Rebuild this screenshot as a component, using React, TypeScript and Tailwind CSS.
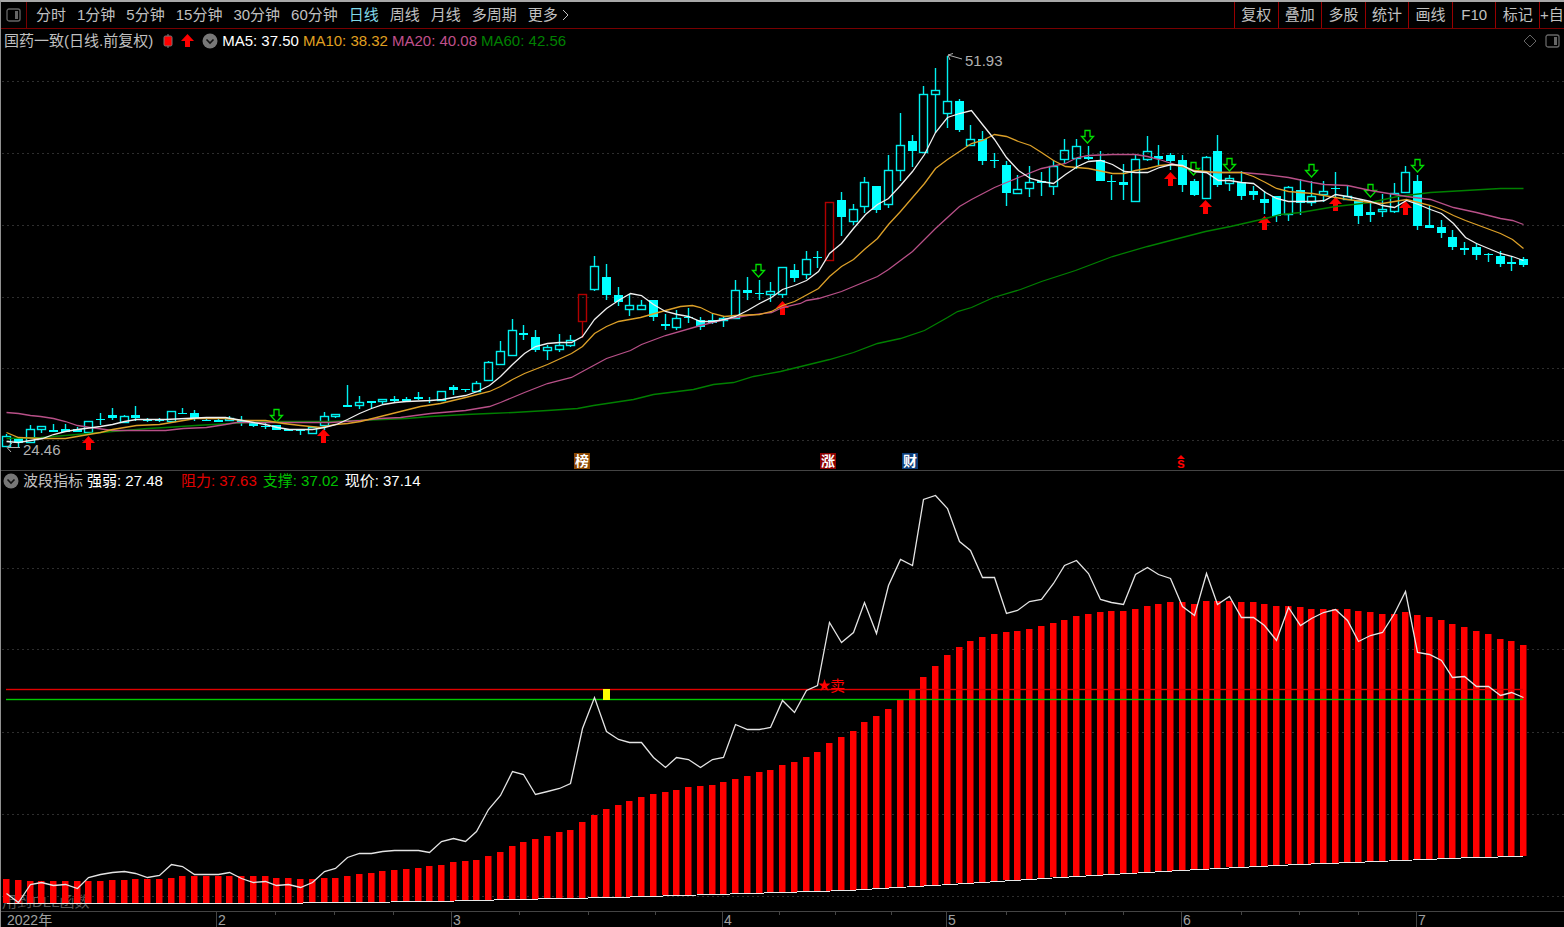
import clsx from 'clsx'

type Candle = [kind: 'h' | 'f' | 'r', high: number, top: number, bottom: number, low: number]
type Point = [x: number, y: number]

const PERIODS = ['分时', '1分钟', '5分钟', '15分钟', '30分钟', '60分钟', '日线', '周线', '月线', '多周期']
const TOOLS = ['复权', '叠加', '多股', '统计', '画线', 'F10', '标记']

const AVERAGES = [
  { label: 'MA5: 37.50', className: 'text-white' },
  { label: 'MA10: 38.32', className: 'text-[#e0a020]' },
  { label: 'MA20: 40.08', className: 'text-[#c0508c]' },
  { label: 'MA60: 42.56', className: 'text-[#008000]' },
]

// h = hollow, f = filled, r = limit-up
const CANDLES: Candle[] = [
  ['h', 434, 436, 447, 447], ['f', 437, 438, 443, 448], ['h', 425, 429, 443, 443], ['h', 426, 426, 430, 433],
  ['f', 424, 430, 432, 432], ['f', 424, 429, 432, 432], ['f', 427, 429, 432, 432], ['h', 421, 421, 433, 433],
  ['f', 413, 419, 420, 425], ['f', 408, 415, 418, 420], ['h', 415, 416, 423, 423], ['f', 406, 415, 418, 421],
  ['f', 418, 419, 421, 422], ['f', 418, 420, 421, 422], ['h', 411, 411, 422, 422], ['f', 408, 413, 414, 414],
  ['f', 410, 413, 419, 421], ['f', 419, 420, 421, 421], ['f', 419, 420, 422, 422], ['h', 416, 418, 421, 421],
  ['f', 416, 420, 423, 426], ['f', 422, 423, 426, 427], ['f', 423, 426, 427, 429], ['f', 425, 425, 430, 430],
  ['f', 429, 429, 431, 431], ['f', 429, 430, 431, 435], ['h', 426, 427, 434, 434], ['h', 412, 416, 426, 430],
  ['h', 414, 414, 417, 418], ['f', 385, 405, 407, 407], ['h', 396, 402, 406, 409], ['f', 401, 401, 403, 408],
  ['h', 399, 399, 402, 404], ['f', 396, 399, 401, 402], ['f', 397, 399, 401, 402], ['f', 392, 397, 399, 400],
  ['f', 397, 400, 401, 403], ['h', 391, 391, 401, 401], ['f', 385, 387, 390, 395], ['f', 389, 389, 390, 392],
  ['h', 381, 383, 392, 392], ['h', 361, 362, 381, 381], ['h', 341, 351, 365, 365], ['h', 319, 330, 356, 356],
  ['f', 325, 333, 335, 340], ['f', 330, 337, 350, 352], ['h', 345, 347, 351, 360], ['h', 334, 345, 350, 352],
  ['h', 335, 340, 346, 347], ['r', 294, 294, 322, 338], ['h', 256, 266, 290, 291], ['f', 264, 277, 295, 300],
  ['f', 287, 295, 302, 306], ['h', 294, 305, 310, 316], ['h', 300, 305, 310, 310], ['f', 300, 300, 317, 321],
  ['f', 314, 324, 326, 330], ['h', 310, 318, 328, 330], ['f', 308, 317, 318, 323], ['f', 317, 320, 327, 330],
  ['f', 314, 320, 323, 324], ['h', 317, 318, 321, 327], ['h', 280, 290, 319, 319], ['f', 277, 290, 293, 300],
  ['f', 280, 293, 294, 300], ['h', 282, 291, 295, 302], ['h', 267, 267, 295, 298], ['f', 264, 270, 278, 282],
  ['h', 251, 259, 275, 279], ['f', 251, 257, 258, 268], ['r', 202, 202, 261, 261], ['f', 192, 200, 217, 236],
  ['h', 204, 209, 222, 225], ['h', 177, 182, 207, 213], ['f', 186, 186, 210, 213], ['h', 155, 170, 205, 208],
  ['h', 113, 145, 171, 181], ['f', 135, 141, 151, 167], ['h', 86, 94, 153, 153], ['h', 68, 90, 95, 133],
  ['h', 56, 101, 114, 128], ['f', 99, 101, 130, 132], ['h', 125, 139, 146, 146], ['f', 131, 139, 161, 165],
  ['f', 153, 160, 161, 168], ['f', 161, 165, 193, 206], ['h', 175, 189, 194, 194], ['h', 166, 182, 189, 197],
  ['f', 172, 181, 183, 196], ['h', 160, 166, 187, 195], ['h', 139, 150, 160, 163], ['h', 139, 146, 159, 169],
  ['f', 146, 157, 159, 160], ['f', 151, 160, 181, 181], ['f', 175, 181, 182, 200], ['f', 164, 182, 185, 200],
  ['h', 155, 159, 202, 202], ['h', 136, 151, 160, 161], ['f', 145, 156, 159, 165], ['f', 153, 155, 161, 170],
  ['f', 155, 160, 185, 192], ['f', 179, 181, 195, 196], ['h', 156, 157, 199, 199], ['f', 135, 151, 185, 187],
  ['h', 175, 178, 184, 191], ['f', 171, 182, 196, 200], ['f', 186, 191, 195, 200], ['f', 191, 199, 203, 214],
  ['f', 196, 196, 216, 222], ['h', 186, 187, 215, 221], ['f', 179, 190, 203, 215], ['h', 181, 196, 203, 206],
  ['h', 181, 191, 195, 202], ['f', 172, 188, 189, 199], ['h', 185, 196, 200, 200], ['f', 200, 200, 216, 224],
  ['f', 202, 212, 215, 222], ['h', 194, 209, 212, 217], ['h', 183, 193, 212, 213], ['h', 166, 172, 193, 193],
  ['f', 175, 181, 226, 230], ['f', 206, 225, 228, 228], ['f', 220, 227, 233, 238], ['f', 230, 237, 247, 250],
  ['f', 242, 248, 250, 255], ['f', 243, 247, 255, 260], ['f', 253, 254, 255, 262], ['f', 251, 256, 264, 267],
  ['f', 257, 262, 264, 271], ['f', 257, 259, 265, 267],
]

const MA5: Point[] = [
  [6, 441], [18, 442], [30, 440], [42, 438], [53, 434], [65, 431], [77, 429], [100, 426], [112, 424], [124, 421],
  [136, 419], [165, 419], [206, 417], [225, 417], [242, 420], [253, 422], [265, 424], [277, 427], [289, 429],
  [312, 429], [324, 427], [336, 424], [347, 419], [359, 413], [371, 408], [383, 404], [395, 402], [406, 401],
  [430, 400], [442, 399], [453, 397], [465, 395], [477, 391], [489, 385], [500, 376], [512, 364], [524, 353],
  [535, 346], [547, 343], [559, 342], [571, 342], [582, 336], [594, 319], [606, 308], [618, 300], [630, 293],
  [641, 295], [653, 304], [665, 311], [677, 314], [688, 316], [700, 321], [712, 321], [724, 319], [735, 316],
  [747, 310], [759, 303], [771, 297], [782, 289], [794, 285], [806, 280], [818, 271], [829, 253], [841, 243],
  [853, 228], [865, 214], [877, 204], [888, 198], [900, 185], [912, 171], [924, 154], [935, 132], [947, 117],
  [959, 113], [971, 110], [982, 124], [994, 139], [1006, 157], [1018, 170], [1030, 178], [1041, 181], [1053, 183],
  [1065, 174], [1077, 166], [1088, 161], [1100, 160], [1112, 164], [1124, 171], [1135, 172], [1147, 172],
  [1159, 167], [1171, 164], [1182, 165], [1194, 171], [1206, 172], [1218, 180], [1229, 180], [1241, 182],
  [1253, 183], [1265, 192], [1276, 198], [1288, 201], [1312, 201], [1324, 200], [1335, 194], [1347, 196],
  [1370, 201], [1382, 205], [1394, 207], [1406, 200], [1418, 204], [1430, 209], [1441, 213], [1453, 223],
  [1465, 237], [1476, 243], [1500, 253], [1512, 256], [1523, 260],
]

const MA10: Point[] = [
  [6, 432], [18, 437], [40, 438], [65, 438], [88, 434], [100, 432], [112, 429], [124, 427], [136, 425], [159, 424],
  [177, 421], [195, 418], [225, 418], [242, 420], [265, 420], [283, 423], [300, 425], [320, 427], [335, 424],
  [347, 423], [360, 421], [380, 416], [400, 411], [420, 406], [440, 403], [465, 397], [489, 391], [500, 386],
  [512, 379], [524, 373], [547, 364], [571, 353], [582, 346], [594, 333], [606, 326], [618, 321], [640, 317],
  [665, 310], [680, 306], [692, 305], [700, 307], [712, 313], [724, 316], [735, 315], [759, 314], [771, 311],
  [782, 305], [794, 301], [818, 288], [829, 276], [841, 266], [853, 259], [865, 248], [877, 238], [888, 224],
  [900, 211], [912, 197], [924, 183], [935, 168], [947, 159], [959, 151], [971, 143], [982, 140], [994, 134],
  [1006, 136], [1018, 141], [1030, 145], [1041, 152], [1053, 160], [1065, 166], [1088, 168], [1112, 173],
  [1124, 173], [1135, 170], [1147, 168], [1159, 165], [1171, 164], [1182, 166], [1194, 170], [1206, 171],
  [1218, 172], [1241, 172], [1253, 176], [1265, 182], [1276, 188], [1288, 191], [1312, 193], [1335, 197],
  [1347, 199], [1370, 202], [1382, 203], [1394, 201], [1406, 199], [1418, 202], [1430, 205], [1441, 209],
  [1453, 215], [1465, 220], [1500, 233], [1512, 239], [1523, 248],
]

const MA20: Point[] = [
  [6, 412], [18, 413], [30, 415], [40, 416], [53, 418], [65, 421], [77, 425], [90, 427], [112, 430], [165, 430],
  [183, 428], [206, 427], [225, 424], [236, 422], [330, 422], [360, 420], [380, 418], [400, 417], [430, 413],
  [465, 410], [489, 406], [500, 402], [512, 397], [524, 392], [547, 383], [571, 377], [582, 371], [606, 358],
  [630, 350], [641, 344], [665, 335], [700, 325], [724, 319], [747, 315], [771, 312], [782, 307], [800, 303],
  [806, 300], [818, 298], [841, 291], [877, 276], [888, 269], [912, 251], [935, 228], [947, 217], [959, 206],
  [971, 199], [994, 187], [1006, 182], [1018, 177], [1041, 168], [1065, 163], [1077, 157], [1088, 155],
  [1112, 154], [1135, 154], [1147, 156], [1159, 159], [1171, 163], [1182, 166], [1194, 171], [1206, 172],
  [1241, 172], [1265, 174], [1288, 177], [1312, 182], [1324, 184], [1347, 185], [1370, 190], [1406, 196],
  [1430, 199], [1453, 207], [1476, 212], [1500, 218], [1512, 220], [1523, 224],
]

const MA60: Point[] = [
  [6, 438], [40, 437], [65, 435], [88, 433], [112, 431], [136, 429], [147, 428], [165, 427], [195, 425],
  [230, 423], [265, 421], [330, 421], [383, 419], [406, 418], [430, 416], [465, 414], [489, 413], [513, 412],
  [547, 410], [577, 408], [593, 405], [633, 399], [653, 394], [693, 389], [713, 384], [733, 382], [753, 376],
  [780, 371], [829, 359], [853, 352], [877, 343], [900, 338], [924, 330], [947, 317], [957, 311], [971, 307],
  [993, 297], [1020, 289], [1041, 281], [1075, 270], [1112, 256], [1147, 246], [1170, 240], [1205, 231],
  [1230, 226], [1265, 218], [1280, 214], [1300, 212], [1335, 206], [1370, 202], [1397, 196], [1430, 192],
  [1465, 190], [1500, 188], [1523, 188],
]

const BAR_TOPS = [
  879, 880, 881, 881, 881, 881, 881, 881, 881, 880, 880, 879, 879, 879, 878, 876, 876, 876, 876, 876, 876, 876, 876,
  878, 878, 879, 879, 878, 878, 876, 874, 873, 871, 870, 869, 868, 866, 865, 862, 861, 860, 856, 852, 846, 842, 839,
  836, 832, 830, 822, 815, 809, 805, 801, 797, 794, 792, 790, 787, 786, 785, 782, 779, 776, 772, 770, 765, 762, 757,
  752, 743, 737, 731, 722, 716, 709, 699, 689, 677, 666, 655, 647, 641, 637, 634, 632, 631, 629, 626, 623, 620, 616,
  614, 612, 611, 611, 609, 606, 604, 602, 602, 604, 601, 601, 601, 602, 602, 604, 606, 606, 607, 609, 609, 609, 609,
  611, 612, 614, 614, 612, 615, 617, 620, 624, 627, 631, 634, 639, 641, 645,
]

const STRENGTH = [
  893, 902, 884, 882, 885, 884, 888, 877, 874, 872, 871, 873, 877, 875, 864, 866, 874, 874, 874, 872, 878, 882, 881,
  885, 884, 887, 882, 871, 868, 857, 853, 853, 851, 850, 850, 850, 852, 841, 838, 841, 831, 809, 795, 771, 774, 794,
  791, 788, 783, 728, 697, 731, 739, 742, 742, 757, 767, 757, 759, 767, 759, 757, 724, 729, 729, 727, 700, 712, 690,
  685, 622, 642, 632, 602, 633, 585, 559, 565, 499, 495, 508, 541, 550, 577, 577, 613, 610, 601, 599, 583, 565, 560,
  573, 599, 602, 604, 574, 567, 574, 578, 606, 615, 573, 604, 596, 617, 617, 625, 640, 607, 625, 618, 612, 609, 620,
  641, 635, 632, 613, 591, 652, 654, 660, 677, 676, 686, 686, 695, 692, 697,
]

const BASELINE: Point[] = [
  [6, 903], [259, 903], [435, 901], [513, 899], [613, 897], [713, 894], [780, 892], [847, 890], [880, 888],
  [950, 884], [1060, 877], [1180, 870], [1297, 864], [1353, 862], [1400, 860], [1473, 857], [1523, 856],
]

const BUY_ARROWS: Point[] = [
  [88, 436], [323, 429], [782, 301], [1170, 172], [1205, 200], [1264, 216], [1335, 197], [1405, 201],
]
const SELL_ARROWS: Point[] = [
  [276, 409], [758, 264], [1087, 130], [1193, 162], [1229, 158], [1311, 164], [1370, 184], [1417, 159],
]

const BADGES = [
  { x: 574, label: '榜', fill: '#8a4500' },
  { x: 820, label: '涨', fill: '#8c0000' },
  { x: 902, label: '财', fill: '#0c3c78' },
]

const MONTHS = [
  { x: 217, label: '2' },
  { x: 452, label: '3' },
  { x: 723, label: '4' },
  { x: 947, label: '5' },
  { x: 1182, label: '6' },
  { x: 1417, label: '7' },
]
const WEEKS = [275, 334, 393, 519, 588, 655, 779, 835, 891, 1006, 1065, 1123, 1241, 1299, 1358]

const xAt = (i: number) => Math.round(6 + 11.76 * i)
const toPoints = (points: Point[]) => points.map(([x, y]) => `${x + 0.5},${y + 0.5}`).join(' ')

const baseAt = (x: number) => {
  const next = Math.max(1, BASELINE.findIndex(([px]) => px >= x))
  const [x0, y0] = BASELINE[next - 1]
  const [x1, y1] = BASELINE[next]
  return Math.round(y0 + ((x - x0) / (x1 - x0)) * (y1 - y0))
}

const GridLines = ({ rows }: { rows: number[] }) => (
  <g stroke="#2e2e2e" strokeDasharray="2 3" shapeRendering="crispEdges">
    {rows.map((y) => (
      <line key={y} x1="2" x2="1564" y1={y + 0.5} y2={y + 0.5} />
    ))}
  </g>
)

const PanelIcon = ({ className }: { className?: string }) => (
  <svg viewBox="0 0 15 14" className={clsx('h-3.5 w-[15px]', className)} fill="none" aria-hidden="true">
    <rect x="1" y="1" width="13" height="12" rx="2" stroke="currentColor" strokeWidth="1.3" />
    <rect x="9" y="3" width="3" height="8" fill="currentColor" />
  </svg>
)

const CollapseButton = ({ label }: { label: string }) => (
  <button type="button" aria-label={label} className="size-4 shrink-0">
    <svg viewBox="0 0 16 16" className="size-4" fill="none" aria-hidden="true">
      <circle cx="8" cy="8" r="7.5" fill="#777" />
      <path d="M4.5 6.5 8 10l3.500-3.500" stroke="#111" strokeWidth="1.6" />
    </svg>
  </button>
)

const Toolbar = () => (
  <header className="flex h-[27px] items-stretch border-b border-[#780000] text-[#c0c0c0]">
    <button
      type="button"
      aria-label="侧栏"
      className="flex w-[26px] shrink-0 items-center justify-center border-r border-[#780000] text-[#666]"
    >
      <PanelIcon />
    </button>
    <nav className="flex min-w-0 flex-1 items-center gap-[11px] overflow-hidden pl-[9px]">
      {PERIODS.map((period) => (
        <button
          key={period}
          type="button"
          className={clsx('shrink-0', period === '日线' && 'text-[#80d8e8]')}
        >
          {period}
        </button>
      ))}
      <button type="button" className="flex shrink-0 items-center gap-1">
        更多
        <svg viewBox="0 0 7 12" className="h-3 w-[7px]" fill="none" aria-hidden="true">
          <path d="m1 1 5 5-5 5" stroke="currentColor" />
        </svg>
      </button>
    </nav>
    <div className="flex w-[305px] shrink-0">
      {TOOLS.map((tool) => (
        <button key={tool} type="button" className="flex-1 border-l border-[#980000]">
          {tool}
        </button>
      ))}
    </div>
    <button type="button" className="w-[25px] shrink-0 border-l border-[#980000] whitespace-nowrap">
      +自
    </button>
  </header>
)

const PriceChart = () => (
  <svg viewBox="1 52 1563 418" className="block h-auto w-full" fill="none" role="img" aria-label="日线">
    <GridLines rows={[81, 153, 225, 297, 368, 440]} />

    {CANDLES.map(([kind, high, top, bottom, low], i) => {
      const x = xAt(i)
      const color = kind === 'r' ? '#b00000' : '#00f0f0'
      return (
        <g key={i} stroke={color} strokeWidth="1.4">
          {top > high && <path d={`M${x + 0.5} ${high}V${top}`} />}
          {low > bottom && <path d={`M${x + 0.5} ${bottom}V${low}`} />}
          {kind === 'f' ? (
            <rect x={x - 4} y={top} width="9" height={bottom - top} fill="#00ffff" stroke="none" />
          ) : (
            <rect x={x - 3.5} y={top + 0.5} width="8" height={bottom - top - 1} />
          )}
        </g>
      )
    })}

    {BUY_ARROWS.map(([x, y]) => (
      <path key={x} d={`M${x + 0.5} ${y}l6.500 7h-4v7h-5v-7h-4z`} fill="#ff0000" />
    ))}
    {SELL_ARROWS.map(([x, y]) => (
      <path key={x} d={`M${x - 2} ${y + 0.5}h5v6h3.500l-6 6.500-6-6.500h3.500z`} stroke="#00e000" strokeWidth="1.3" />
    ))}

    <g strokeWidth="1.3">
      <polyline points={toPoints(MA60)} stroke="#008000" />
      <polyline points={toPoints(MA20)} stroke="#b85088" />
      <polyline points={toPoints(MA10)} stroke="#dca028" />
      <polyline points={toPoints(MA5)} stroke="#f0f0f0" />
    </g>

    <g stroke="#b0b0b0">
      <path d="m948 55 14 4M953 53.500l-5 1.500 2 5" />
      <path d="M8 447.500h12M12 443l-5 4.500 4 4.500" />
    </g>
    <g fill="#b0b0b0" fontSize="15">
      <text x="965" y="66">51.93</text>
      <text x="23" y="455">24.46</text>
    </g>

    {BADGES.map(({ x, label, fill }) => (
      <g key={label}>
        <rect x={x} y="453" width="16" height="16" fill={fill} />
        <text x={x + 8} y="466" fill="#fff" fontSize="14" fontWeight="700" textAnchor="middle">
          {label}
        </text>
      </g>
    ))}
    <path d="m1177 459 4-4 4 4z" fill="#ff0000" />
    <text x="1181" y="468" fill="#ff0000" fontSize="14" fontWeight="700" textAnchor="middle">
      s
    </text>
  </svg>
)

const WaveChart = () => (
  <svg viewBox="1 491 1563 420" className="block h-auto w-full" fill="none" role="img" aria-label="波段指标">
    <GridLines rows={[568, 649, 732, 814, 896]} />
    <text x="2" y="907" fill="#5a5a5a" fontSize="15">
      用到DLL函数
    </text>

    <g fill="#ff0000">
      {BAR_TOPS.map((top, i) => (
        <rect key={i} x={xAt(i) - 3} y={top} width="6.500" height={baseAt(xAt(i)) - top} />
      ))}
    </g>

    <polyline points={toPoints(BASELINE)} stroke="#e8e8e8" shapeRendering="crispEdges" />
    <rect x="6" y="688.8" width="1517" height="1.4" fill="#e00000" />
    <rect x="6" y="698.8" width="1517" height="1.4" fill="#00c800" />
    <polyline points={toPoints(STRENGTH.map((y, i) => [xAt(i), y]))} stroke="#e4e4e4" strokeWidth="1.3" />

    <rect x="603" y="689" width="7" height="11" fill="#ffff00" />
    <path d="m824.500 679 1.500 4.500h4.500l-3.500 3 1.500 4.500-4-3-4 3 1.500-4.500-3.500-3h4.500z" fill="#ff0000" />
    <text x="830" y="691" fill="#ff0000" fontSize="15">
      卖
    </text>
  </svg>
)

const TimeAxis = () => (
  <svg viewBox="1 911 1563 16" className="block h-auto w-full" fill="none" role="img" aria-label="日期">
    <g stroke="#444" shapeRendering="crispEdges">
      <line x1="1" x2="1564" y1="911.5" y2="911.5" />
      {MONTHS.map(({ x }) => (
        <line key={x} x1={x - 0.5} x2={x - 0.5} y1="911" y2="927" />
      ))}
      {WEEKS.map((x) => (
        <line key={x} x1={x + 0.5} x2={x + 0.5} y1="911" y2="915" />
      ))}
    </g>
    <g fill="#a0a0a0" fontSize="14">
      <text x="7" y="925">2022年</text>
      {MONTHS.map(({ x, label }) => (
        <text key={x} x={x + 1} y="925">
          {label}
        </text>
      ))}
    </g>
  </svg>
)

const App = () => {
  return (
    <main className="min-h-screen overflow-hidden border-t-2 border-l border-t-[#a8a8a8] border-l-[#909090] bg-black font-['Liberation_Sans','Noto_Sans_CJK_SC',sans-serif] text-[15px] leading-5 text-[#c0c0c0]">
      <Toolbar />

      <section>
        <div className="flex h-[23px] items-center gap-1 pr-1 pl-[3px] whitespace-nowrap">
          <h1>国药一致(日线.前复权)</h1>
          <svg viewBox="0 0 10 14" className="ml-1.5 h-3.5 w-2.5" aria-hidden="true">
            <path d="M5 0v14" stroke="#888" />
            <rect x="1" y="2" width="8" height="10" rx="1.500" fill="#ff0000" stroke="#777" />
          </svg>
          <svg viewBox="0 0 13 14" className="mx-1 h-3.5 w-[13px]" aria-hidden="true">
            <path d="m6.500 0 6.500 7H9v6H4V7H0z" fill="#ff0000" />
          </svg>
          <CollapseButton label="主图指标" />
          {AVERAGES.map(({ label, className }) => (
            <span key={label} className={className}>
              {label}
            </span>
          ))}
          <div className="ml-auto flex items-center gap-2 text-[#666]">
            <button type="button" aria-label="标注">
              <svg viewBox="0 0 14 14" className="size-3.5" fill="none" aria-hidden="true">
                <path d="m7 1 6 6-6 6-6-6z" stroke="currentColor" />
              </svg>
            </button>
            <button type="button" aria-label="窗口">
              <PanelIcon />
            </button>
          </div>
        </div>
        <PriceChart />
      </section>

      <section className="border-t border-[#444]">
        <div className="flex h-5 items-center gap-1 pl-0.5 whitespace-nowrap">
          <CollapseButton label="副图指标" />
          <h2>波段指标</h2>
          <span className="text-white">强弱: 27.48</span>
          <span className="ml-3.5 text-[#e00000]">阻力: 37.63</span>
          <span className="ml-0.5 text-[#00c000]">支撑: 37.02</span>
          <span className="ml-0.5 text-white">现价: 37.14</span>
        </div>
        <WaveChart />
        <TimeAxis />
      </section>
    </main>
  )
}

export default App
